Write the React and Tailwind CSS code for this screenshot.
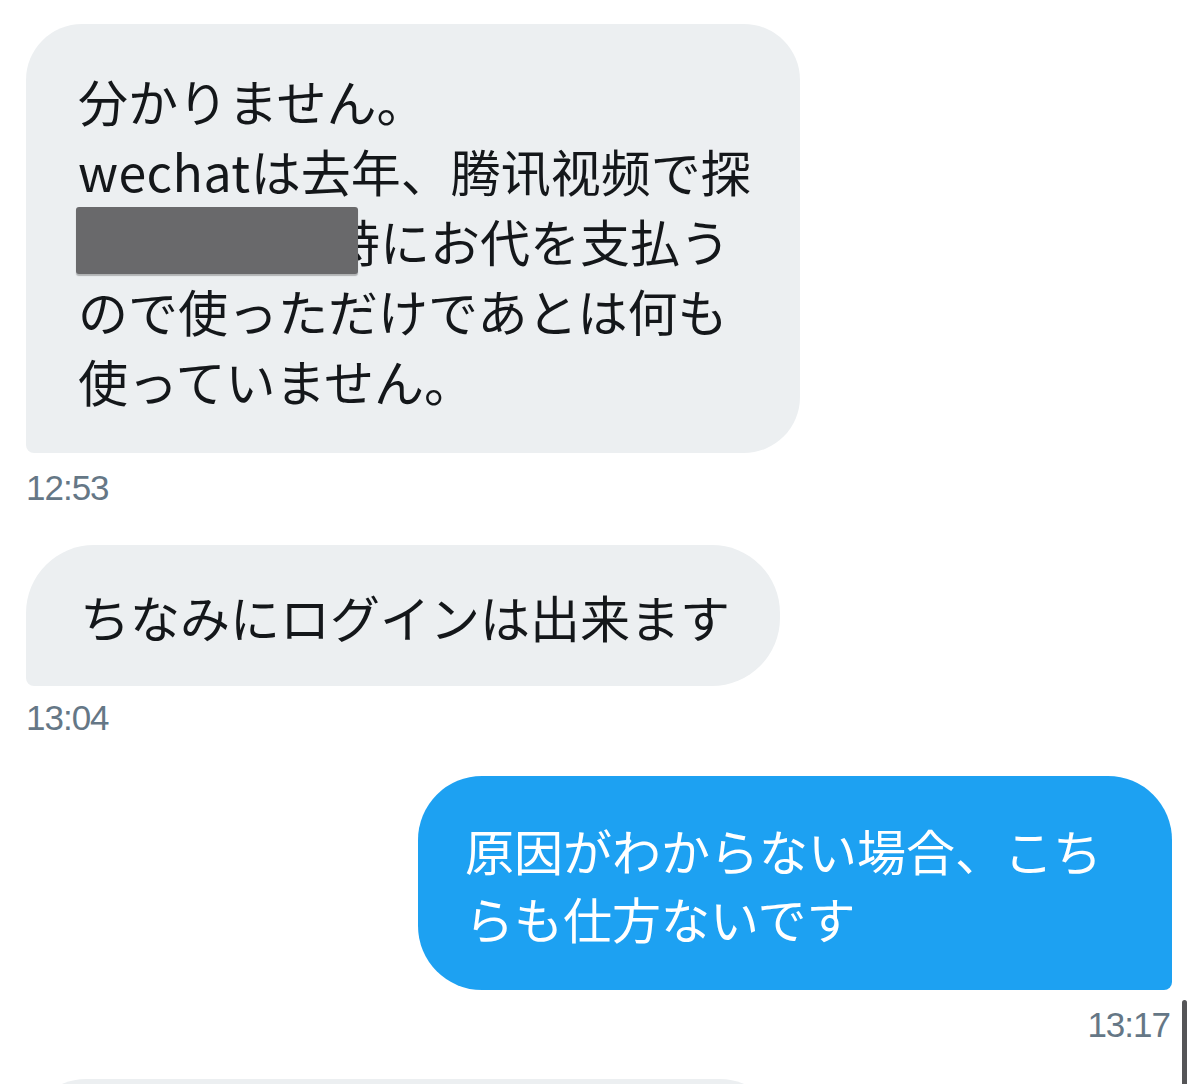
import React from 'react';

const jp = { fontFamily: '"Noto Sans CJK JP", "Noto Sans", sans-serif' };

function Stamp({ children, right }) {
  return (
    <div
      className={`text-[35px] leading-[40px] text-[#657786] font-['Liberation_Sans',sans-serif] tracking-[-1px] ${right ? 'self-end mr-[2px]' : 'self-start'}`}
    >
      {children}
    </div>
  );
}

export default function App() {
  return (
    <div className="relative h-[1084px] w-[1200px] overflow-hidden bg-white" style={jp}>
      <div className="flex flex-col pl-[26px] pr-[28px] pt-[24px]">
        {/* received: long message */}
        <div className="w-[774px] h-[429px] rounded-[56px] rounded-bl-[8px] bg-[#eceff1] pl-[52px] pt-[41px] text-[50px] leading-[70px] text-[#14171a] whitespace-nowrap">
          <div>分かりません。</div>
          <div>
            <span className="tracking-[0.5px]">wechat</span>は去年、腾讯视频で探
          </div>
          <div className="relative">
            <span className="inline-block w-[252px]" />
            時にお代を支払う
            <span className="absolute left-[-2px] top-[2px] h-[67px] w-[282px] rounded-[3px] bg-[#69696b] shadow-[0_2px_1px_rgba(0,0,0,0.25)]" />
          </div>
          <div>ので使っただけであとは何も</div>
          <div>使っていません。</div>
        </div>
        <div className="mt-[15px]">
          <Stamp>12:53</Stamp>
        </div>

        {/* received: short message */}
        <div className="mt-[37px] flex h-[141px] w-[754px] items-center rounded-[68px] rounded-bl-[8px] bg-[#eceff1] pl-[54px] text-[50px] leading-[70px] text-[#14171a] whitespace-nowrap">
          ちなみにログインは出来ます
        </div>
        <div className="mt-[12px]">
          <Stamp>13:04</Stamp>
        </div>

        {/* sent message */}
        <div className="mt-[38px] flex flex-col self-end">
          <div className="h-[214px] w-[754px] rounded-[64px] rounded-br-[8px] bg-[#1da1f2] pl-[47px] pt-[40px] text-[49px] leading-[68px] text-white whitespace-nowrap">
            <div>原因がわからない場合、こち</div>
            <div>らも仕方ないです</div>
          </div>
          <div className="mt-[15px] flex justify-end">
            <Stamp right>13:17</Stamp>
          </div>
        </div>

        {/* next received bubble, cut off */}
        <div className="mt-[34px] h-[140px] w-[754px] rounded-[60px] rounded-bl-[8px] bg-[#eceff1]" />
      </div>

      {/* scroll indicator */}
      <div className="absolute right-[13px] top-[1000px] h-[100px] w-[5px] rounded-full bg-[#555557]" />
    </div>
  );
}
